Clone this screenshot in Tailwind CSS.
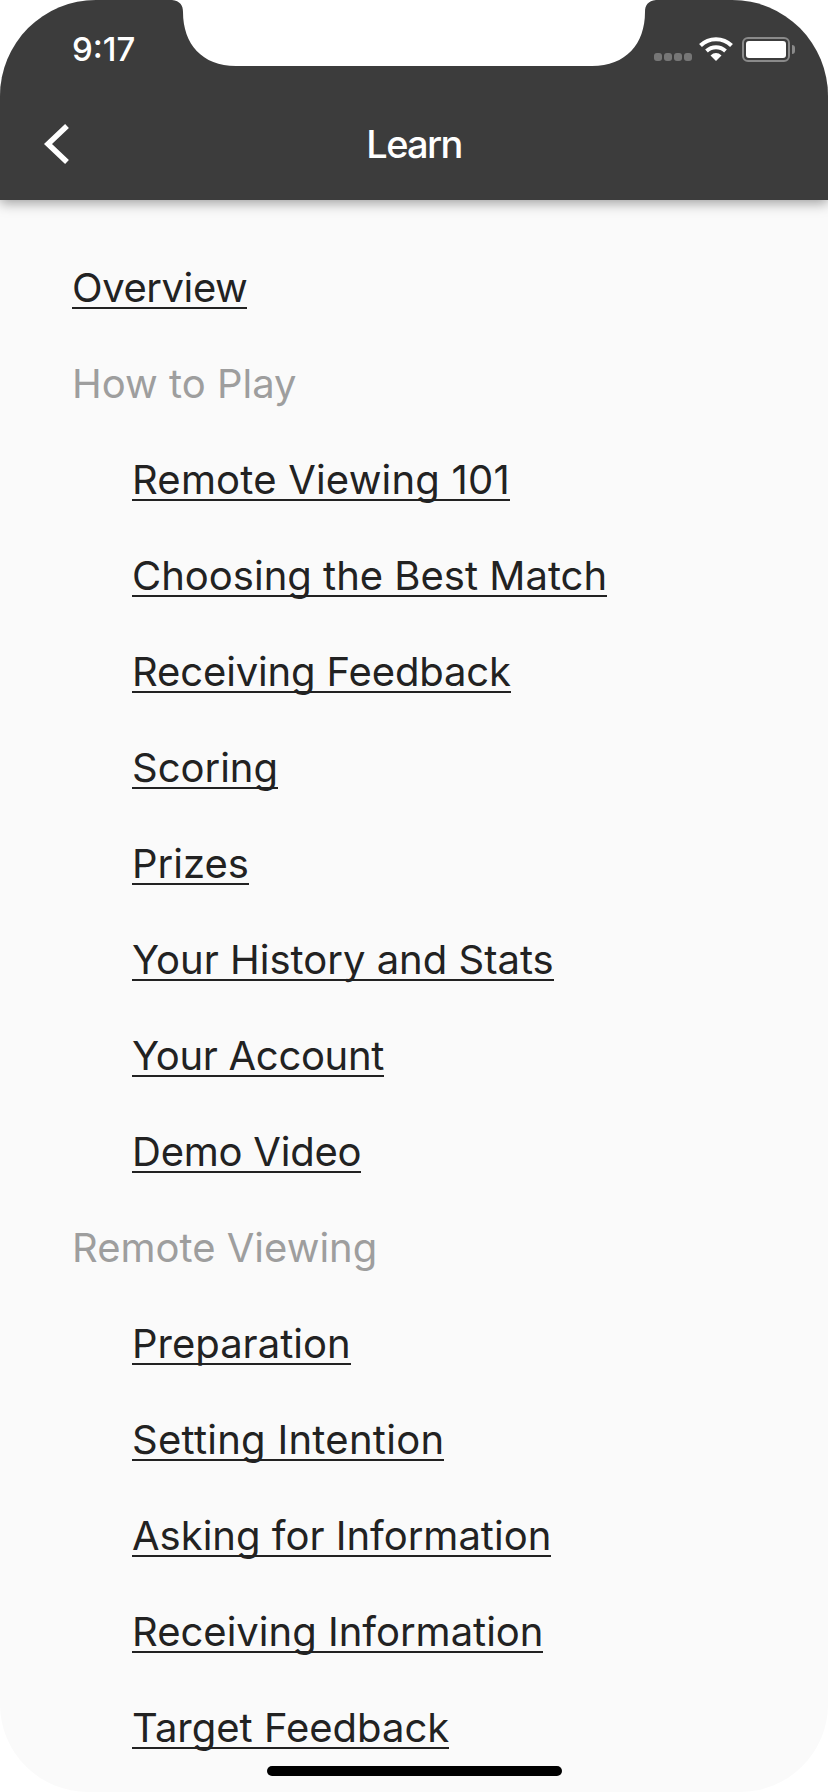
<!DOCTYPE html>
<html lang="en">
<head>
<meta charset="UTF-8">
<meta name="viewport" content="width=device-width, initial-scale=1.0">
<title>Learn</title>
<script src="https://cdn.jsdelivr.net/npm/@tailwindcss/browser@4"></script>
</head>
<body class="bg-white font-['Inter',sans-serif]">
<div class="relative w-[828px] h-[1792px] overflow-hidden bg-white">
  <div class="w-full h-full flex flex-col bg-[#fafafa] rounded-t-[96px] rounded-b-[88px] overflow-hidden">
    <!-- header -->
    <header class="relative h-[200px] shrink-0 bg-[#3c3c3c] shadow-[0_3px_12px_rgba(0,0,0,0.38)] text-white z-10">
      <div class="flex justify-between items-center h-[98px] pl-[72px] pr-[33px]">
        <span class="text-[33px] font-medium leading-none">9:17</span>
        <div class="flex items-center">
          <div class="flex gap-[2px] mr-[7px] mt-[16px]">
            <i class="block w-[8px] h-[8px] rounded-[3px] bg-white/30"></i>
            <i class="block w-[8px] h-[8px] rounded-[3px] bg-white/30"></i>
            <i class="block w-[8px] h-[8px] rounded-[3px] bg-white/30"></i>
            <i class="block w-[8px] h-[8px] rounded-[3px] bg-white/30"></i>
          </div>
          <svg class="w-[34px] h-[26px] mr-[9px]" viewBox="0 0 34 26" fill="none">
            <path d="M1.5 9.5C10 1 24 1 32.5 9.5" stroke="#fff" stroke-width="4"/>
            <path d="M7.5 15C13 10 21 10 26.5 15" stroke="#fff" stroke-width="4"/>
            <path d="M11.5 19.5C15 16.2 19 16.2 22.5 19.5L17 25Z" fill="#fff"/>
          </svg>
          <div class="w-[48px] h-[25px] border-2 border-[#8a8a8a] rounded-[6px] p-[2px]">
            <div class="w-full h-full bg-white rounded-[3px]"></div>
          </div>
          <div class="w-[3px] h-[9px] bg-[#8a8a8a] rounded-r-full ml-[2px]"></div>
        </div>
      </div>
      <div class="grid grid-cols-[1fr_auto_1fr] items-center h-[92px] pl-[43px]">
        <svg class="w-[27px] h-[42px]" viewBox="0 0 27 42" fill="none">
          <path d="M24 3L5 21L24 39" stroke="#fff" stroke-width="5.5"/>
        </svg>
        <h1 class="text-[38px] font-medium leading-none tracking-[-1.7px] -ml-[43px]">Learn</h1>
      </div>
    </header>
    <!-- menu -->
    <main class="pl-[72px] pt-[41px] text-[40px] text-[#222]">
      <ul>
        <li class="h-[96px] flex items-center"><a class="inline-block leading-[38px] border-b-[2.5px] border-[#222] tracking-[-0.43px]">Overview</a></li>
        <li class="h-[96px] flex items-center text-[#9e9e9e]"><span class="inline-block leading-[38px] border-b-[2.5px] border-transparent">How to Play</span></li>
        <li class="h-[96px] flex items-center pl-[60px]"><a class="inline-block leading-[38px] border-b-[2.5px] border-[#222] tracking-[0.2px]">Remote Viewing 101</a></li>
        <li class="h-[96px] flex items-center pl-[60px]"><a class="inline-block leading-[38px] border-b-[2.5px] border-[#222]">Choosing the Best Match</a></li>
        <li class="h-[96px] flex items-center pl-[60px]"><a class="inline-block leading-[38px] border-b-[2.5px] border-[#222] tracking-[-0.13px]">Receiving Feedback</a></li>
        <li class="h-[96px] flex items-center pl-[60px]"><a class="inline-block leading-[38px] border-b-[2.5px] border-[#222]">Scoring</a></li>
        <li class="h-[96px] flex items-center pl-[60px]"><a class="inline-block leading-[38px] border-b-[2.5px] border-[#222]">Prizes</a></li>
        <li class="h-[96px] flex items-center pl-[60px]"><a class="inline-block leading-[38px] border-b-[2.5px] border-[#222]">Your History and Stats</a></li>
        <li class="h-[96px] flex items-center pl-[60px]"><a class="inline-block leading-[38px] border-b-[2.5px] border-[#222] tracking-[-0.3px]">Your Account</a></li>
        <li class="h-[96px] flex items-center pl-[60px]"><a class="inline-block leading-[38px] border-b-[2.5px] border-[#222] tracking-[-0.23px]">Demo Video</a></li>
        <li class="h-[96px] flex items-center text-[#9e9e9e]"><span class="inline-block leading-[38px] border-b-[2.5px] border-transparent">Remote Viewing</span></li>
        <li class="h-[96px] flex items-center pl-[60px]"><a class="inline-block leading-[38px] border-b-[2.5px] border-[#222]">Preparation</a></li>
        <li class="h-[96px] flex items-center pl-[60px]"><a class="inline-block leading-[38px] border-b-[2.5px] border-[#222] tracking-[0.27px]">Setting Intention</a></li>
        <li class="h-[96px] flex items-center pl-[60px]"><a class="inline-block leading-[38px] border-b-[2.5px] border-[#222]">Asking for Information</a></li>
        <li class="h-[96px] flex items-center pl-[60px]"><a class="inline-block leading-[38px] border-b-[2.5px] border-[#222]">Receiving Information</a></li>
        <li class="h-[96px] flex items-center pl-[60px]"><a class="inline-block leading-[38px] border-b-[2.5px] border-[#222]">Target Feedback</a></li>
      </ul>
    </main>
  </div>
  <!-- notch -->
  <svg class="absolute left-0 top-0 z-20 w-[828px] h-[70px]" viewBox="0 0 828 70">
    <path d="M172 0C180 1 183 5 183 12C183 44 202 66 236 66H592C626 66 645 44 645 12C645 5 648 1 656 0Z" fill="#fff"/>
  </svg>
  <!-- home indicator -->
  <div class="absolute left-[267px] top-[1766px] w-[295px] h-[10px] rounded-full bg-black z-20"></div>
</div>
</body>
</html>
